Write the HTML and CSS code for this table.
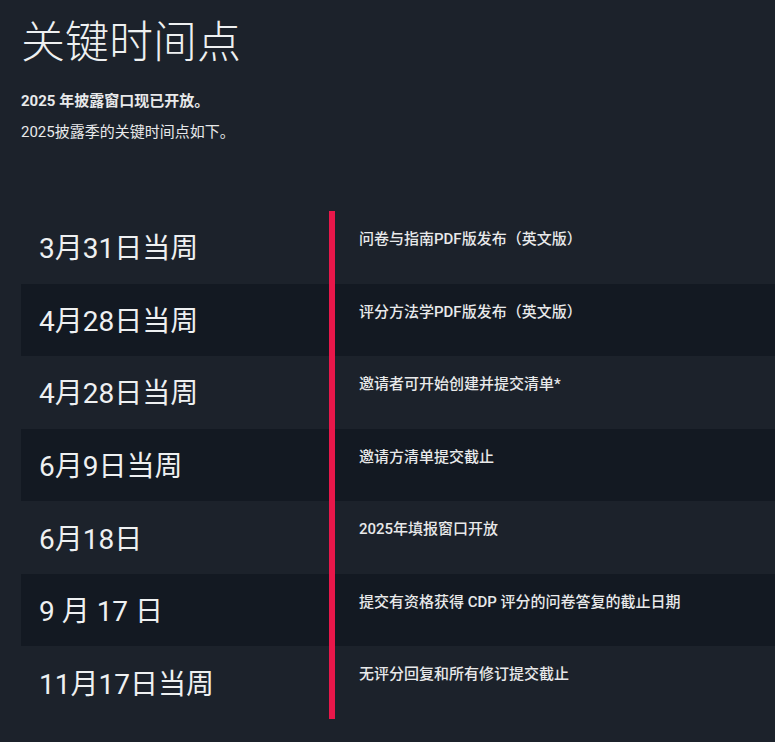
FILE: index.html
```html
<!DOCTYPE html>
<html lang="zh-CN">
<head>
<meta charset="utf-8">
<title>关键时间点</title>
<link rel="stylesheet" href="styles.css">
</head>
<body>
<main class="page">
  <h1 class="title">关键时间点</h1>
  <p class="lead-strong">2025 年披露窗口现已开放。</p>
  <p class="lead">2025披露季的关键时间点如下。</p>

  <section class="timeline">
    <div class="row">
      <div class="date">3月31日当周</div>
      <div class="bar"></div>
      <div class="desc">问卷与指南PDF版发布（英文版）</div>
    </div>
    <div class="row alt">
      <div class="date">4月28日当周</div>
      <div class="bar"></div>
      <div class="desc">评分方法学PDF版发布（英文版）</div>
    </div>
    <div class="row">
      <div class="date">4月28日当周</div>
      <div class="bar"></div>
      <div class="desc">邀请者可开始创建并提交清单*</div>
    </div>
    <div class="row alt">
      <div class="date">6月9日当周</div>
      <div class="bar"></div>
      <div class="desc">邀请方清单提交截止</div>
    </div>
    <div class="row">
      <div class="date">6月18日</div>
      <div class="bar"></div>
      <div class="desc">2025年填报窗口开放</div>
    </div>
    <div class="row alt">
      <div class="date">9 月 17 日</div>
      <div class="bar"></div>
      <div class="desc">提交有资格获得 CDP 评分的问卷答复的截止日期</div>
    </div>
    <div class="row">
      <div class="date">11月17日当周</div>
      <div class="bar"></div>
      <div class="desc">无评分回复和所有修订提交截止</div>
    </div>
  </section>
</main>
</body>
</html>
```

FILE: styles.css
```css
html, body {
  margin: 0;
  padding: 0;
}

body {
  background: #1c222b;
  color: #e8e9ea;
  font-family: Roboto, "Noto Sans CJK SC", sans-serif;
}

.page {
  padding: 9px 0 0 21px;
}

.title {
  margin: 0;
  font-size: 44px;
  line-height: 60px;
  font-weight: 300;
  font-family: "Noto Sans CJK SC", sans-serif;
  color: #eef0f1;
}

.lead-strong {
  margin: 22px 0 0 0;
  font-size: 15px;
  line-height: 20px;
  font-weight: 700;
}

.lead {
  margin: 11px 0 0 0;
  font-size: 15px;
  line-height: 20px;
  font-weight: 400;
}

.timeline {
  margin-top: 69px;
  display: flex;
  flex-direction: column;
}

.row {
  display: grid;
  grid-template-columns: 308px 6px 1fr;
  height: 72.57px;
}

.row.alt {
  background: #131922;
}

.date {
  display: flex;
  align-items: center;
  padding: 0 0 2px 18px;
  font-size: 28px;
  font-weight: 400;
  color: #eef0f1;
}

.bar {
  background: #e8174a;
}

.desc {
  padding: 18px 24px 0 24px;
  font-size: 15px;
  line-height: 20px;
  font-weight: 500;
  color: #e8e9ea;
}
```
